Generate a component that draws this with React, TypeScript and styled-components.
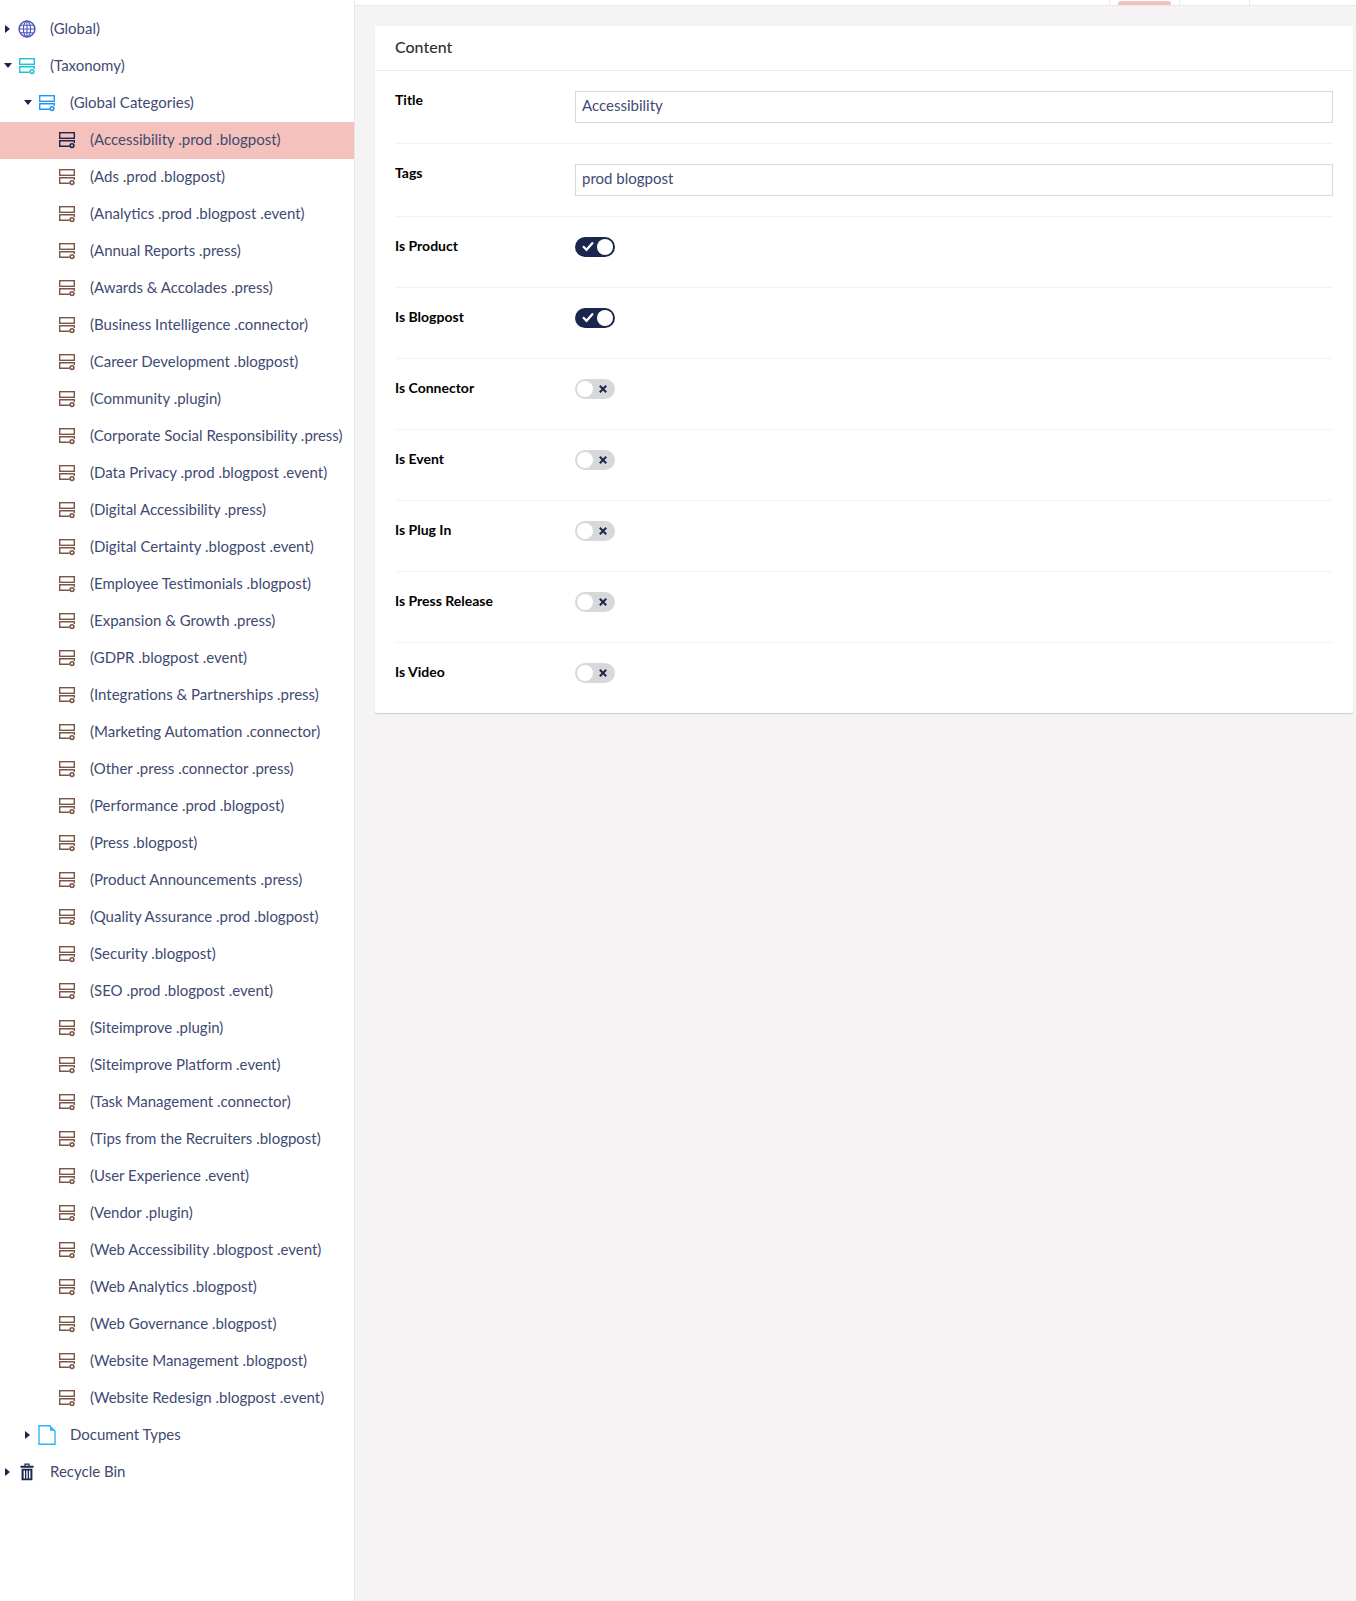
import React from 'react';
import styled, { createGlobalStyle } from 'styled-components';

const GlobalStyle = createGlobalStyle`
  html, body {
    margin: 0;
    padding: 0;
    background: #fff;
    font-family: Lato, "Open Sans", sans-serif;
  }
`;

const categories = [
  '(Ads .prod .blogpost)',
  '(Analytics .prod .blogpost .event)',
  '(Annual Reports .press)',
  '(Awards & Accolades .press)',
  '(Business Intelligence .connector)',
  '(Career Development .blogpost)',
  '(Community .plugin)',
  '(Corporate Social Responsibility .press)',
  '(Data Privacy .prod .blogpost .event)',
  '(Digital Accessibility .press)',
  '(Digital Certainty .blogpost .event)',
  '(Employee Testimonials .blogpost)',
  '(Expansion & Growth .press)',
  '(GDPR .blogpost .event)',
  '(Integrations & Partnerships .press)',
  '(Marketing Automation .connector)',
  '(Other .press .connector .press)',
  '(Performance .prod .blogpost)',
  '(Press .blogpost)',
  '(Product Announcements .press)',
  '(Quality Assurance .prod .blogpost)',
  '(Security .blogpost)',
  '(SEO .prod .blogpost .event)',
  '(Siteimprove .plugin)',
  '(Siteimprove Platform .event)',
  '(Task Management .connector)',
  '(Tips from the Recruiters .blogpost)',
  '(User Experience .event)',
  '(Vendor .plugin)',
  '(Web Accessibility .blogpost .event)',
  '(Web Analytics .blogpost)',
  '(Web Governance .blogpost)',
  '(Website Management .blogpost)',
  '(Website Redesign .blogpost .event)',
];

const toggles = [
  { label: 'Is Product', on: true },
  { label: 'Is Blogpost', on: true },
  { label: 'Is Connector', on: false },
  { label: 'Is Event', on: false },
  { label: 'Is Plug In', on: false },
  { label: 'Is Press Release', on: false },
  { label: 'Is Video', on: false },
];

function StackIcon({ color }: { color: string }) {
  return (
    <svg width="18" height="18" viewBox="0 0 18 18" fill="none" stroke={color} strokeWidth="1.4">
      <rect x="1.7" y="1.7" width="14.6" height="5.6" />
      <path d="M11.5 15.3H1.7V9.7H16.3V12" />
      <circle cx="14" cy="14.6" r="1.9" strokeWidth="1.6" />
    </svg>
  );
}

function GlobeIcon() {
  return (
    <svg width="18" height="18" viewBox="0 0 18 18" fill="none" stroke="#4a56b8" strokeWidth="1.1">
      <circle cx="9" cy="9" r="7.9" strokeWidth="1.5" />
      <ellipse cx="9" cy="9" rx="3.6" ry="7.9" />
      <path d="M9 1.1V16.9M1.1 9H16.9M2.4 5.2H15.6M2.4 12.8H15.6" />
    </svg>
  );
}

function DocIcon() {
  return (
    <svg width="18" height="20" viewBox="0 0 18 20" fill="none">
      <path d="M1 .8H11.6L17 6.2V19.2H1Z" stroke="#2bb7f7" strokeWidth="1.4" />
      <path d="M12 .5L17.3 5.8H12Z" fill="#2bb7f7" />
    </svg>
  );
}

function TrashIcon() {
  return (
    <svg width="18" height="18" viewBox="0 0 18 18" fill="#1b264f">
      <path d="M2.5 2.8H6.4V.6H11.6V2.8H15.5V4.8H2.5ZM7.6 1.8V2.8H10.4V1.8Z" fillRule="evenodd" />
      <path d="M3.6 5.8H14.4V17.2H3.6ZM5.6 7.4V15.6H7V7.4ZM8.3 7.4V15.6H9.7V7.4ZM11 7.4V15.6H12.4V7.4Z" fillRule="evenodd" />
    </svg>
  );
}

function TreeRow(props: {
  level: number;
  arrow?: 'open' | 'closed';
  selected?: boolean;
  icon: React.ReactNode;
  label: string;
}) {
  return (
    <Row $level={props.level} $selected={props.selected}>
      <ArrowSlot>{props.arrow && <Arrow $open={props.arrow === 'open'} />}</ArrowSlot>
      <IconSlot>{props.icon}</IconSlot>
      <RowLabel>{props.label}</RowLabel>
    </Row>
  );
}

function Toggle({ on }: { on: boolean }) {
  return (
    <Switch $on={on}>
      {on ? (
        <SwitchGlyph width="12" height="12" viewBox="0 0 12 12" $on>
          <path d="M1 6.3L4.5 9.8L11 2.4" fill="none" stroke="#fff" strokeWidth="2.2" />
        </SwitchGlyph>
      ) : (
        <SwitchGlyph width="12" height="12" viewBox="0 0 12 12">
          <path d="M2.8 2.8L9.2 9.2M9.2 2.8L2.8 9.2" fill="none" stroke="#1b264f" strokeWidth="2" />
        </SwitchGlyph>
      )}
      <Knob $on={on} />
    </Switch>
  );
}

export default function App() {
  return (
    <Page>
      <GlobalStyle />
      <Sidebar>
        <TreeRow level={0} arrow="closed" icon={<GlobeIcon />} label="(Global)" />
        <TreeRow level={0} arrow="open" icon={<StackIcon color="#19c3d8" />} label="(Taxonomy)" />
        <TreeRow level={1} arrow="open" icon={<StackIcon color="#2196f3" />} label="(Global Categories)" />
        <TreeRow level={2} selected icon={<StackIcon color="#1b264f" />} label="(Accessibility .prod .blogpost)" />
        {categories.map((name) => (
          <TreeRow key={name} level={2} icon={<StackIcon color="#7a5548" />} label={name} />
        ))}
        <TreeRow level={1} arrow="closed" icon={<DocIcon />} label="Document Types" />
        <TreeRow level={0} arrow="closed" icon={<TrashIcon />} label="Recycle Bin" />
      </Sidebar>
      <Main>
        <TopBar>
          <Tab $active />
          <Tab />
          <TabEnd />
        </TopBar>
        <Card>
          <CardHeader>Content</CardHeader>
          <CardBody>
            <Property>
              <PropLabel>Title</PropLabel>
              <TextBox>Accessibility</TextBox>
            </Property>
            <Property>
              <PropLabel>Tags</PropLabel>
              <TextBox>prod blogpost</TextBox>
            </Property>
            {toggles.map((item) => (
              <ToggleProperty key={item.label}>
                <PropLabel>{item.label}</PropLabel>
                <Toggle on={item.on} />
              </ToggleProperty>
            ))}
          </CardBody>
        </Card>
      </Main>
    </Page>
  );
}

const Page = styled.div`
  display: flex;
  width: 1356px;
  height: 1601px;
  overflow: hidden;
`;

const Sidebar = styled.nav`
  flex: 0 0 354px;
  box-sizing: content-box;
  padding-top: 11px;
  background: #fff;
  border-right: 1px solid #e9e9eb;
`;

const Row = styled.div<{ $level: number; $selected?: boolean }>`
  display: flex;
  align-items: center;
  height: 37px;
  padding-left: ${(p) => p.$level * 20 + 3}px;
  background: ${(p) => (p.$selected ? '#f5c1bc' : 'transparent')};
`;

const ArrowSlot = styled.span`
  display: flex;
  align-items: center;
  justify-content: center;
  width: 9px;
  height: 10px;
  margin: 0 6px 2px 0;
`;

const Arrow = styled.span<{ $open: boolean }>`
  width: 0;
  height: 0;
  ${(p) =>
    p.$open
      ? `border-left: 4px solid transparent;
         border-right: 4px solid transparent;
         border-top: 5px solid #1b264f;`
      : `border-top: 4px solid transparent;
         border-bottom: 4px solid transparent;
         border-left: 5px solid #1b264f;`}
`;

const IconSlot = styled.span`
  display: flex;
  align-items: center;
  width: 18px;
  height: 18px;
  margin: 0 14px 2px 0;
`;

const RowLabel = styled.span`
  padding-bottom: 4px;
  font-size: 15px;
  color: #3f4a72;
  white-space: nowrap;
`;

const Main = styled.main`
  flex: 1;
  display: flex;
  flex-direction: column;
  background: #f5f3f4;
`;

const TopBar = styled.div`
  display: flex;
  justify-content: flex-end;
  height: 5px;
  background: #fff;
  border-bottom: 1px solid #e9e9eb;
  padding-right: 106px;
`;

const Tab = styled.div<{ $active?: boolean }>`
  position: relative;
  box-sizing: border-box;
  width: 70px;
  border-left: 1px solid #e9e9eb;

  ${(p) =>
    p.$active &&
    `&::after {
      content: '';
      position: absolute;
      left: 8px;
      right: 8px;
      top: 1px;
      bottom: 0;
      background: #f5c1bc;
      border-radius: 3px 3px 0 0;
    }`}
`;

const TabEnd = styled.div`
  width: 1px;
  background: #e9e9eb;
`;

const Card = styled.section`
  margin: 20px 3px 0 20px;
  background: #fff;
  border-radius: 3px;
  box-shadow: 0 1px 1px rgba(0, 0, 0, 0.16);
`;

const CardHeader = styled.h2`
  box-sizing: border-box;
  height: 45px;
  margin: 0;
  padding: 0 20px;
  font-size: 16px;
  font-weight: 500;
  line-height: 41px;
  color: #303033;
  border-bottom: 1px solid #e9e9eb;
`;

const CardBody = styled.div`
  padding: 0 20px;
`;

const Property = styled.div`
  display: flex;
  align-items: flex-start;
  padding: 20px 0;
  border-bottom: 1px solid #f3f3f5;
`;

const ToggleProperty = styled(Property)`
  padding-bottom: 30px;

  &:last-child {
    border-bottom: none;
  }
`;

const PropLabel = styled.label`
  flex: 0 0 180px;
  font-size: 14px;
  font-weight: 700;
  line-height: 18px;
  color: #000;
`;

const TextBox = styled.div`
  box-sizing: border-box;
  flex: 1;
  height: 32px;
  padding: 0 6px;
  font-size: 15px;
  line-height: 26px;
  color: #3f4a72;
  border: 1px solid #d8d7d9;
`;

const Switch = styled.span<{ $on: boolean }>`
  position: relative;
  display: block;
  width: 40px;
  height: 20px;
  border-radius: 10px;
  background: ${(p) => (p.$on ? '#1b264f' : '#d8d7d9')};
`;

const SwitchGlyph = styled.svg<{ $on?: boolean }>`
  position: absolute;
  top: ${(p) => (p.$on ? '3px' : '4px')};
  left: ${(p) => (p.$on ? '7px' : '22px')};
`;

const Knob = styled.span<{ $on: boolean }>`
  position: absolute;
  top: 2px;
  left: ${(p) => (p.$on ? '22px' : '2px')};
  width: 16px;
  height: 16px;
  border-radius: 50%;
  background: #fff;
`;
